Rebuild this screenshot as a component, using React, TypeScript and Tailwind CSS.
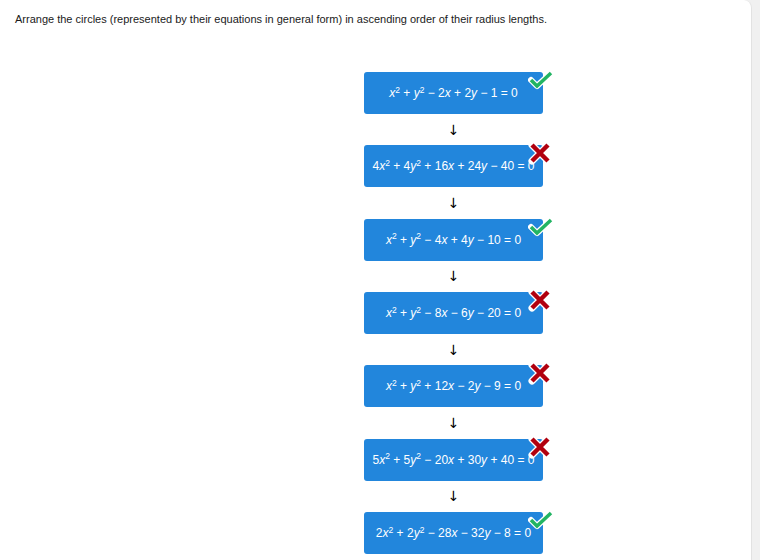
import React from "react";

type Item = { parts: React.ReactNode; ok: boolean };

const X = () => <i>x</i>;
const Y = () => <i>y</i>;
const Sq = () => <sup className="text-[8.5px]">2</sup>;

const items: Item[] = [
  { parts: <>
      <X /><Sq /> + <Y /><Sq /> − 2<X /> + 2<Y /> − 1 = 0
    </>, ok: true },
  { parts: <>
      4<X /><Sq /> + 4<Y /><Sq /> + 16<X /> + 24<Y /> − 40 = 0
    </>, ok: false },
  { parts: <>
      <X /><Sq /> + <Y /><Sq /> − 4<X /> + 4<Y /> − 10 = 0
    </>, ok: true },
  { parts: <>
      <X /><Sq /> + <Y /><Sq /> − 8<X /> − 6<Y /> − 20 = 0
    </>, ok: false },
  { parts: <>
      <X /><Sq /> + <Y /><Sq /> + 12<X /> − 2<Y /> − 9 = 0
    </>, ok: false },
  { parts: <>
      5<X /><Sq /> + 5<Y /><Sq /> − 20<X /> + 30<Y /> + 40 = 0
    </>, ok: false },
  { parts: <>
      2<X /><Sq /> + 2<Y /><Sq /> − 28<X /> − 32<Y /> − 8 = 0
    </>, ok: true },
];

function CheckMark() {
  return (
    <svg width="26" height="22" viewBox="0 0 26 22" className="absolute -right-[11px] -top-[3px]">
      <polyline points="3,11 9,17 23,4" fill="none" stroke="#ffffff" strokeWidth="6" strokeLinecap="round" strokeLinejoin="round" />
      <polyline points="3,11 9,17 23,4" fill="none" stroke="#22b463" strokeWidth="3.5" strokeLinejoin="miter" />
    </svg>
  );
}

function CrossMark() {
  return (
    <svg width="24" height="24" viewBox="0 0 24 24" className="absolute -right-[9px] -top-[4px]">
      <path d="M4 4 L20 20 M20 4 L4 20" stroke="#ffffff" strokeWidth="7" strokeLinecap="round" />
      <path d="M4 4 L20 20 M20 4 L4 20" stroke="#b1000f" strokeWidth="4.5" />
    </svg>
  );
}

export default function App() {
  return (
    <div className="flex h-[560px] w-[760px] bg-[#f0f0f0] font-['Liberation_Sans',Arial,sans-serif]">
      <div className="h-full w-[752px] rounded-tr-[8px] border-r border-[#e2e2e2] bg-white">
        <p className="pl-[15px] pt-[12px] text-[11px] leading-[14px] text-[#1a1a1a]">
          Arrange the circles (represented by their equations in general form) in ascending order of their radius lengths.
        </p>
        <div className="ml-[364px] mt-[46px] flex w-[179px] flex-col">
          {items.map((it, i) => (
            <React.Fragment key={i}>
              {i > 0 && (
                <div className="flex h-[31.33px] items-center justify-center font-['DejaVu_Sans',sans-serif] text-[14px] leading-none text-black">
                  ↓
                </div>
              )}
              <div className="relative flex h-[42px] items-center justify-center whitespace-nowrap rounded-[3px] bg-[#2286dc] text-[12px] text-white">
                <span>{it.parts}</span>
                {it.ok ? <CheckMark /> : <CrossMark />}
              </div>
            </React.Fragment>
          ))}
        </div>
      </div>
    </div>
  );
}
